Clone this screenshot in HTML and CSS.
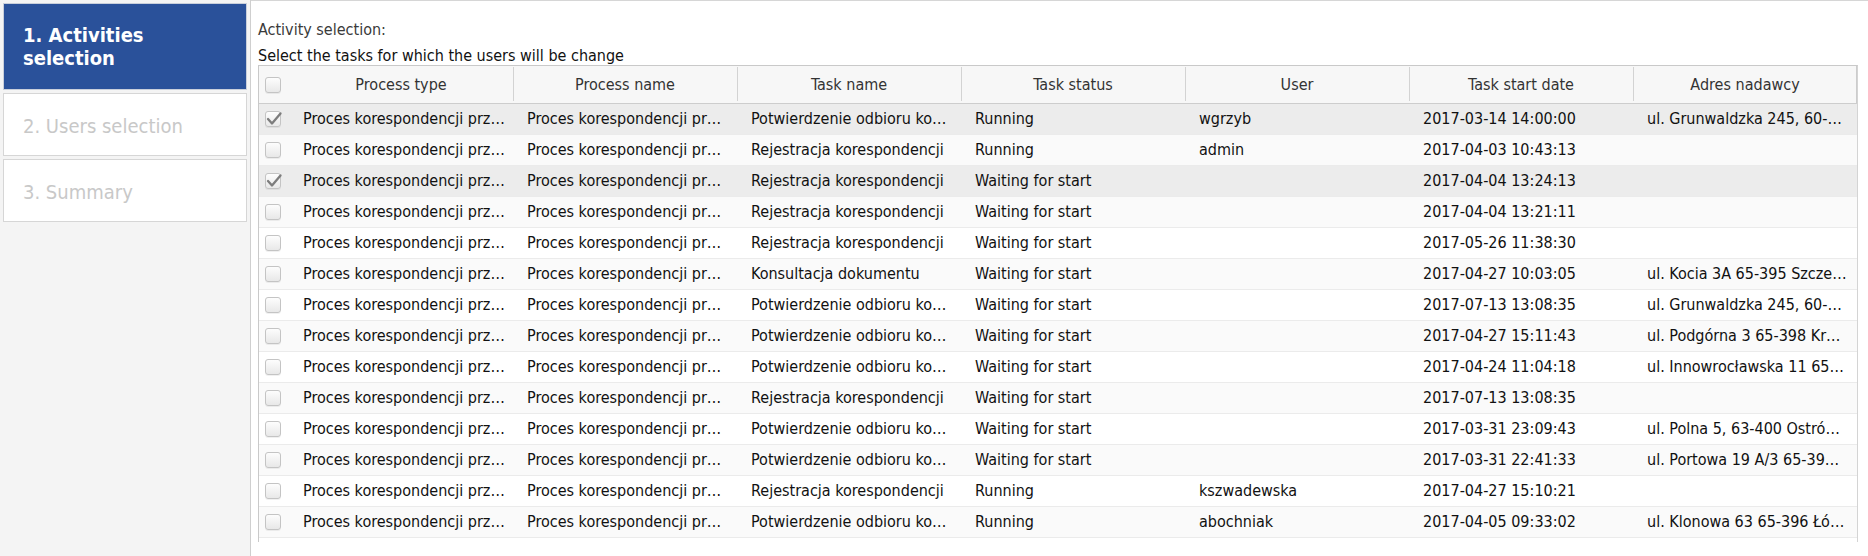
FILE: index.html
```html
<!DOCTYPE html>
<html lang="en">
<head>
<meta charset="utf-8">
<title>Activities selection</title>
<link rel="stylesheet" href="styles.css">
</head>
<body>
<div class="app">
  <aside class="sidebar">
    <div class="step step-active">1. Activities<br>selection</div>
    <div class="step">2. Users selection</div>
    <div class="step">3. Summary</div>
  </aside>
  <main class="panel">
    <div class="label label-muted">Activity selection:</div>
    <div class="label label-strong">Select the tasks for which the users will be change</div>
    <div class="grid">
      <div class="grid-head">
        <div class="cell cell-check"><span class="cb"></span></div>
        <div class="hcell">Process type</div>
        <div class="hcell sep">Process name</div>
        <div class="hcell sep">Task name</div>
        <div class="hcell sep">Task status</div>
        <div class="hcell sep">User</div>
        <div class="hcell sep">Task start date</div>
        <div class="hcell sep last">Adres nadawcy</div>
      </div>

      <div class="grid-row selected">
        <div class="cell cell-check"><span class="cb"><svg class="tick" viewBox="0 0 16 16"><polyline points="2,7 6,11.5 14.5,1.5"/></svg></span></div>
        <div class="cell">Proces korespondencji prz…</div>
        <div class="cell">Proces korespondencji pr…</div>
        <div class="cell">Potwierdzenie odbioru ko…</div>
        <div class="cell">Running</div>
        <div class="cell">wgrzyb</div>
        <div class="cell">2017-03-14 14:00:00</div>
        <div class="cell">ul. Grunwaldzka 245, 60-…</div>
      </div>
      <div class="grid-row alt">
        <div class="cell cell-check"><span class="cb"></span></div>
        <div class="cell">Proces korespondencji prz…</div>
        <div class="cell">Proces korespondencji pr…</div>
        <div class="cell">Rejestracja korespondencji</div>
        <div class="cell">Running</div>
        <div class="cell">admin</div>
        <div class="cell">2017-04-03 10:43:13</div>
        <div class="cell"></div>
      </div>
      <div class="grid-row selected">
        <div class="cell cell-check"><span class="cb"><svg class="tick" viewBox="0 0 16 16"><polyline points="2,7 6,11.5 14.5,1.5"/></svg></span></div>
        <div class="cell">Proces korespondencji prz…</div>
        <div class="cell">Proces korespondencji pr…</div>
        <div class="cell">Rejestracja korespondencji</div>
        <div class="cell">Waiting for start</div>
        <div class="cell"></div>
        <div class="cell">2017-04-04 13:24:13</div>
        <div class="cell"></div>
      </div>
      <div class="grid-row alt">
        <div class="cell cell-check"><span class="cb"></span></div>
        <div class="cell">Proces korespondencji prz…</div>
        <div class="cell">Proces korespondencji pr…</div>
        <div class="cell">Rejestracja korespondencji</div>
        <div class="cell">Waiting for start</div>
        <div class="cell"></div>
        <div class="cell">2017-04-04 13:21:11</div>
        <div class="cell"></div>
      </div>
      <div class="grid-row">
        <div class="cell cell-check"><span class="cb"></span></div>
        <div class="cell">Proces korespondencji prz…</div>
        <div class="cell">Proces korespondencji pr…</div>
        <div class="cell">Rejestracja korespondencji</div>
        <div class="cell">Waiting for start</div>
        <div class="cell"></div>
        <div class="cell">2017-05-26 11:38:30</div>
        <div class="cell"></div>
      </div>
      <div class="grid-row alt">
        <div class="cell cell-check"><span class="cb"></span></div>
        <div class="cell">Proces korespondencji prz…</div>
        <div class="cell">Proces korespondencji pr…</div>
        <div class="cell">Konsultacja dokumentu</div>
        <div class="cell">Waiting for start</div>
        <div class="cell"></div>
        <div class="cell">2017-04-27 10:03:05</div>
        <div class="cell">ul. Kocia 3A 65-395 Szcze…</div>
      </div>
      <div class="grid-row">
        <div class="cell cell-check"><span class="cb"></span></div>
        <div class="cell">Proces korespondencji prz…</div>
        <div class="cell">Proces korespondencji pr…</div>
        <div class="cell">Potwierdzenie odbioru ko…</div>
        <div class="cell">Waiting for start</div>
        <div class="cell"></div>
        <div class="cell">2017-07-13 13:08:35</div>
        <div class="cell">ul. Grunwaldzka 245, 60-…</div>
      </div>
      <div class="grid-row alt">
        <div class="cell cell-check"><span class="cb"></span></div>
        <div class="cell">Proces korespondencji prz…</div>
        <div class="cell">Proces korespondencji pr…</div>
        <div class="cell">Potwierdzenie odbioru ko…</div>
        <div class="cell">Waiting for start</div>
        <div class="cell"></div>
        <div class="cell">2017-04-27 15:11:43</div>
        <div class="cell">ul. Podgórna 3 65-398 Kr…</div>
      </div>
      <div class="grid-row">
        <div class="cell cell-check"><span class="cb"></span></div>
        <div class="cell">Proces korespondencji prz…</div>
        <div class="cell">Proces korespondencji pr…</div>
        <div class="cell">Potwierdzenie odbioru ko…</div>
        <div class="cell">Waiting for start</div>
        <div class="cell"></div>
        <div class="cell">2017-04-24 11:04:18</div>
        <div class="cell">ul. Innowrocławska 11 65…</div>
      </div>
      <div class="grid-row alt">
        <div class="cell cell-check"><span class="cb"></span></div>
        <div class="cell">Proces korespondencji prz…</div>
        <div class="cell">Proces korespondencji pr…</div>
        <div class="cell">Rejestracja korespondencji</div>
        <div class="cell">Waiting for start</div>
        <div class="cell"></div>
        <div class="cell">2017-07-13 13:08:35</div>
        <div class="cell"></div>
      </div>
      <div class="grid-row">
        <div class="cell cell-check"><span class="cb"></span></div>
        <div class="cell">Proces korespondencji prz…</div>
        <div class="cell">Proces korespondencji pr…</div>
        <div class="cell">Potwierdzenie odbioru ko…</div>
        <div class="cell">Waiting for start</div>
        <div class="cell"></div>
        <div class="cell">2017-03-31 23:09:43</div>
        <div class="cell">ul. Polna 5, 63-400 Ostró…</div>
      </div>
      <div class="grid-row alt">
        <div class="cell cell-check"><span class="cb"></span></div>
        <div class="cell">Proces korespondencji prz…</div>
        <div class="cell">Proces korespondencji pr…</div>
        <div class="cell">Potwierdzenie odbioru ko…</div>
        <div class="cell">Waiting for start</div>
        <div class="cell"></div>
        <div class="cell">2017-03-31 22:41:33</div>
        <div class="cell">ul. Portowa 19 A/3 65-39…</div>
      </div>
      <div class="grid-row">
        <div class="cell cell-check"><span class="cb"></span></div>
        <div class="cell">Proces korespondencji prz…</div>
        <div class="cell">Proces korespondencji pr…</div>
        <div class="cell">Rejestracja korespondencji</div>
        <div class="cell">Running</div>
        <div class="cell">kszwadewska</div>
        <div class="cell">2017-04-27 15:10:21</div>
        <div class="cell"></div>
      </div>
      <div class="grid-row alt">
        <div class="cell cell-check"><span class="cb"></span></div>
        <div class="cell">Proces korespondencji prz…</div>
        <div class="cell">Proces korespondencji pr…</div>
        <div class="cell">Potwierdzenie odbioru ko…</div>
        <div class="cell">Running</div>
        <div class="cell">abochniak</div>
        <div class="cell">2017-04-05 09:33:02</div>
        <div class="cell">ul. Klonowa 63 65-396 Łó…</div>
      </div>
    </div>
  </main>
</div>
</body>
</html>
```

FILE: styles.css
```css
html, body {
  margin: 0;
  padding: 0;
  background: #ffffff;
}

body {
  font-family: "DejaVu Sans Condensed", "DejaVu Sans", sans-serif;
  font-stretch: condensed;
  font-size: 16px;
  color: #111111;
}

.app {
  display: flex;
  height: 556px;
  width: 1868px;
  overflow: hidden;
}

/* ---------- Sidebar ---------- */
.sidebar {
  width: 250px;
  flex: 0 0 250px;
  background: #f4f4f4;
  border-right: 1px solid #cfcfcf;
  padding-top: 3px;
  display: flex;
  flex-direction: column;
  gap: 3px;
}

.step {
  margin: 0 3px;
  border: 1px solid #d6d6d6;
  background: #ffffff;
  color: #c8c8c8;
  font-size: 20px;
  line-height: 23px;
  padding: 21px 19px 17px;
  white-space: nowrap;
}

.step-active {
  background: #2a519a;
  border-color: #c9cfdb;
  color: #ffffff;
  font-weight: bold;
  padding: 20px 19px 19px;
}

/* ---------- Panel ---------- */
.panel {
  flex: 1 1 auto;
  border-top: 1px solid #d6d6d6;
  padding: 19px 10px 0 7px;
  display: flex;
  flex-direction: column;
  min-width: 0;
}

.label {
  line-height: 19px;
  height: 19px;
  white-space: nowrap;
}

.label-muted {
  color: #3a3a3a;
}

.label-strong {
  margin-top: 7px;
  color: #111111;
}

/* ---------- Grid ---------- */
.grid {
  border-top: 1px solid #c9c9c9;
  border-left: 1px solid #c9c9c9;
  border-right: 1px solid #d4d4d4;
  padding-bottom: 4px;
  align-self: stretch;
}

.grid-head,
.grid-row {
  display: grid;
  grid-template-columns: 30px repeat(7, 1fr);
}

.grid-head {
  height: 37px;
  background: #f7f7f7;
  border-bottom: 1px solid #cdcdcd;
  color: #333333;
}

.hcell {
  position: relative;
  text-align: center;
  line-height: 37px;
  white-space: nowrap;
  overflow: hidden;
}

.hcell.sep::before {
  content: "";
  position: absolute;
  left: 0;
  top: 1px;
  bottom: 2px;
  width: 1px;
  background: #d3d3d3;
}

.hcell.last::after {
  content: "";
  position: absolute;
  right: 0;
  top: 0;
  bottom: 0;
  width: 1px;
  background: #cccccc;
}

.grid-row {
  height: 30px;
  border-bottom: 1px solid #ebebeb;
  background: #ffffff;
}

.grid-row.alt {
  background: #fafafa;
}

.grid-row.selected {
  background: #ececec;
}

.cell {
  padding: 0 14px;
  line-height: 30px;
  white-space: nowrap;
  overflow: hidden;
  min-width: 0;
}

.grid-head .cell {
  line-height: 37px;
}

.cell-check {
  padding: 0 0 0 6px;
  display: flex;
  align-items: center;
}

.cb {
  width: 14px;
  height: 14px;
  border: 1px solid #c4c4c4;
  border-radius: 3px;
  background: linear-gradient(#fdfdfd, #e8e8e8);
  box-shadow: 0 1px 0 rgba(0, 0, 0, 0.06);
  position: relative;
  display: block;
}

.tick {
  position: absolute;
  left: 0;
  top: 0;
  width: 16px;
  height: 16px;
  overflow: visible;
}

.tick polyline {
  fill: none;
  stroke: #7d7d7d;
  stroke-width: 2.3;
  stroke-linecap: round;
  stroke-linejoin: round;
}
```
